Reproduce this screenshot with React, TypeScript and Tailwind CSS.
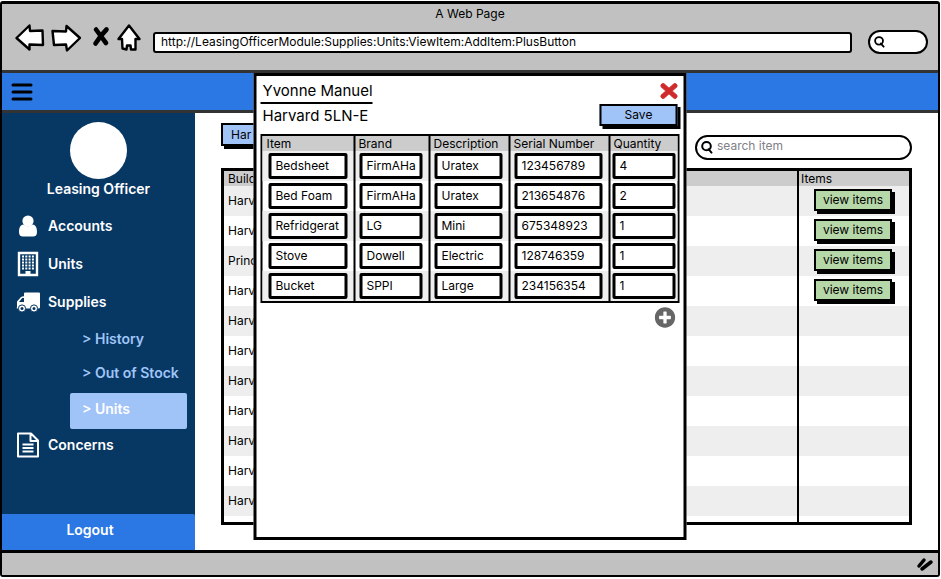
import React from "react";
import { FaPlusCircle, FaTimes } from "react-icons/fa";

const units = [
  "Harvard",
  "Harvard",
  "Princeton",
  "Harvard",
  "Harvard",
  "Harvard",
  "Harvard",
  "Harvard",
  "Harvard",
  "Harvard",
  "Harvard",
];

const fields = ["Item", "Brand", "Description", "Serial Number", "Quantity"];

const supplies = [
  ["Bedsheet", "FirmAHa", "Uratex", "123456789", "4"],
  ["Bed Foam", "FirmAHa", "Uratex", "213654876", "2"],
  ["Refridgerat", "LG", "Mini", "675348923", "1"],
  ["Stove", "Dowell", "Electric", "128746359", "1"],
  ["Bucket", "SPPI", "Large", "234156354", "1"],
];

function Magnifier({ className }: { className: string }) {
  return (
    <svg viewBox="0 0 12 13" className={className} fill="none" stroke="currentColor" strokeWidth="2" strokeLinecap="round" aria-hidden="true">
      <ellipse cx="5.5" cy="5.2" rx="4.3" ry="4.1" />
      <path d="M7.5 8.2l3 3.4" />
    </svg>
  );
}

function BrowserHeader() {
  return (
    <header className="border-b-[3px] border-[#333] bg-[#c1c1c1] pb-4">
      <h1 className="pt-0.5 text-center text-[12px] leading-4">A Web Page</h1>
      <div className="flex items-center pl-[13px] pr-2.5">
        <button aria-label="Back" className="shrink-0">
          <svg viewBox="0 0 30 28" className="h-7 w-[30px]" fill="#fff" stroke="#000" strokeWidth="2.4" strokeLinejoin="round" aria-hidden="true">
            <path d="M14.500 1.500L1.500 14L14.500 25.500V20.500L28 21L27.500 6.500L15 7Z" />
          </svg>
        </button>
        <button aria-label="Forward" className="ml-1.5 shrink-0">
          <svg viewBox="0 0 30 28" className="h-7 w-[30px]" fill="#fff" stroke="#000" strokeWidth="2.4" strokeLinejoin="round" aria-hidden="true">
            <path d="M15.500 2L29 14L16 26.500L15 20.500L3 21L1.500 7L15 7.500Z" />
          </svg>
        </button>
        <button aria-label="Stop" className="ml-2.5 shrink-0">
          <svg viewBox="0 0 20 28" className="h-7 w-5" fill="none" stroke="#000" strokeWidth="4.600" strokeLinecap="round" aria-hidden="true">
            <path d="M5 5.500Q9 11 15 19M15.500 5.500Q10 11 4.500 19.500" />
          </svg>
        </button>
        <button aria-label="Home" className="ml-1.5 shrink-0">
          <svg viewBox="0 0 24 28" className="h-7 w-6" fill="#fff" stroke="#000" strokeWidth="2.4" strokeLinejoin="round" aria-hidden="true">
            <path d="M12 1.500L1.500 15H5L5.500 24.500L9.500 25.500L10 21.500H13.500L14 25.500H18.500V15H22.500Z" />
          </svg>
        </button>
        <input
          aria-label="Address"
          readOnly
          value="http://LeasingOfficerModule:Supplies:Units:ViewItem:AddItem:PlusButton"
          className="ml-3 mt-2 h-[21px] min-w-0 flex-1 rounded-[3px] border-2 border-black bg-white pl-1.5 pb-0.5 text-[12px] outline-none"
        />
        <label className="ml-4 mt-2 flex h-6 w-[60px] items-center rounded-full border-2 border-black bg-white pl-1">
          <Magnifier className="h-3 w-[11px] shrink-0" />
          <input aria-label="Search the web" className="w-full min-w-0 bg-transparent outline-none" />
        </label>
      </div>
    </header>
  );
}

const navLink = "flex h-[38px] items-center gap-2 pl-3.5 text-white";

function Sidebar() {
  return (
    <aside className="flex w-[193px] shrink-0 flex-col bg-[#073763] text-[14px] font-semibold leading-5 text-white">
      <div className="flex flex-col items-center pt-[9px]">
        <div className="h-[57px] w-[57px] rounded-full bg-white" />
        <p>Leasing Officer</p>
      </div>
      <nav aria-label="Main" className="pt-2">
        <a href="#accounts" className={navLink}>
          <svg viewBox="0 0 24 24" className="h-6 w-6 shrink-0" fill="currentColor" aria-hidden="true">
            <path d="M7.500 10.500C4 11 3 14 3 18Q3 22.500 7 22.500H17Q21 22.500 21 18C21 14 20 11 16.500 10.500Q12 14 7.500 10.500Z" />
            <circle cx="12" cy="7" r="5.600" />
          </svg>
          Accounts
        </a>
        <a href="#units" className={navLink}>
          <svg viewBox="0 0 24 26" className="h-[26px] w-6 shrink-0" aria-hidden="true">
            <path d="M3 2H21V24H3Z" fill="none" stroke="currentColor" strokeWidth="2.400" />
            <path d="M6 5.500H18.500M6 8.500H18.500M6 11.500H18.500M6 14.500H18.500M6 17.500H18.500" stroke="currentColor" strokeWidth="2" strokeDasharray="2 1.300" />
            <path d="M9.500 20H14.500V24H9.500Z" fill="currentColor" />
          </svg>
          Units
        </a>
        <a href="#supplies" className={navLink}>
          <svg viewBox="0 0 24 24" className="h-6 w-6 shrink-0" fill="currentColor" aria-hidden="true">
            <path fillRule="evenodd" d="M9 2.500H23Q24 2.500 24 3.500V17.500Q24 18.500 22 18.500H1.500Q0 18.500 1 17V11.500L5 7Q6 6.200 8 6.200V3.500Q8 2.500 9 2.500ZM3 12H8V8H6.200Z" />
            <circle cx="6" cy="18.500" r="3.600" stroke="#073763" />
            <circle cx="18" cy="18.500" r="3.600" stroke="#073763" />
            <circle cx="6" cy="18.500" r="1.500" fill="#073763" />
            <circle cx="18" cy="18.500" r="1.500" fill="#073763" />
          </svg>
          Supplies
        </a>
        <div className="pl-[68px] pr-2 text-[#9fc5f8]">
          <a href="#history" className="flex h-9 items-center pl-3">&gt; History</a>
          <a href="#out-of-stock" className="flex h-9 items-center whitespace-nowrap pb-1 pl-3">&gt; Out of Stock</a>
          <a href="#supply-units" aria-current="page" className="flex h-9 items-center rounded-[2px] bg-[#a0c3f8] pb-1 pl-3 text-white">&gt; Units</a>
        </div>
        <a href="#concerns" className="flex h-8 items-center gap-2 pl-3.5 text-white">
          <svg viewBox="0 0 24 26" className="h-[26px] w-6 shrink-0" fill="none" stroke="currentColor" strokeWidth="2" strokeLinejoin="round" aria-hidden="true">
            <path d="M2 1.500H15L22 8.500V24.500H2ZM14.500 1.500V9H22M6.500 12.500H17.500M6.500 16H17.500M6.500 19.500H17.500" />
          </svg>
          Concerns
        </a>
      </nav>
      <button className="mt-auto h-9 rounded-tr-[2px] bg-[#2b78e4] pb-1 pr-[17px] font-semibold">Logout</button>
    </aside>
  );
}

function UnitsPage() {
  return (
    <main className="min-w-0 flex-1 bg-white pl-[26px] pr-[26px] pt-2">
      <div className="flex items-start justify-between">
        <button className="mt-0.5 h-[23px] w-9 border-2 border-black bg-[#a0c3f8] pl-2 text-left text-[12px] shadow-[3px_3px_0_#000]">Har</button>
        <label className="mt-3.5 flex h-[25px] w-[217px] items-center gap-1 rounded-full border-2 border-black pl-1">
          <Magnifier className="h-[13px] w-3 shrink-0" />
          <input aria-label="Search item" placeholder="search item" className="w-full min-w-0 bg-transparent pb-1 text-[12px] placeholder-[#808088] outline-none" />
        </label>
      </div>
      <div className="mt-2 border-[3px] border-black">
        <table className="w-full border-collapse text-left text-[12px]">
          <thead>
            <tr className="h-[15px] bg-[#ccc] leading-[15px]">
              <th scope="col" className="border-r-2 border-black pl-1 font-normal">Building</th>
              <th scope="col" className="w-[111px] pl-0.5 font-normal">Items</th>
            </tr>
          </thead>
          <tbody>
            {units.map((building, i) => (
              <tr key={i} className="h-[30px] odd:bg-[#eee]">
                <td className="border-r-2 border-black p-0 pl-1">{building}</td>
                <td className="p-0 pl-[15px] pt-[3px] align-top">
                  {i < 4 && (
                    <button className="block h-[22px] w-[78px] border-2 border-black bg-[#b6d7a8] text-[12px] leading-4 shadow-[3px_3px_0_#000]">view items</button>
                  )}
                </td>
              </tr>
            ))}
          </tbody>
          <tfoot>
            <tr className="h-1.5">
              <td className="border-r-2 border-black p-0" />
              <td className="p-0" />
            </tr>
          </tfoot>
        </table>
      </div>
    </main>
  );
}

function AddItemDialog() {
  return (
    <section role="dialog" aria-label="Yvonne Manuel" className="absolute inset-y-0 left-1/2 mb-2.5 w-[433px] -translate-x-1/2 border-[3px] border-black bg-white px-1 pt-1">
      <div className="flex items-start justify-between">
        <div className="text-[15px] leading-6">
          <h2 className="border-b-2 border-black pl-0.5 leading-[22px]">Yvonne Manuel</h2>
          <p className="pl-0.5">Harvard 5LN-E</p>
        </div>
        <div className="flex flex-col items-end gap-0.5 pr-0.5">
          <button aria-label="Close" className="text-[#d02b2b]">
            <FaTimes className="h-[22px] w-[17px]" preserveAspectRatio="none" stroke="currentColor" strokeWidth="20" />
          </button>
          <button className="h-[22px] w-[78px] border-2 border-black bg-[#a0c3f8] text-[12px] leading-4 shadow-[3px_3px_0_#000]">Save</button>
        </div>
      </div>
      <div className="mt-1.5 border-2 border-black">
        <table className="w-full table-fixed border-collapse text-left text-[12px]">
          <colgroup>
            <col className="w-[92px]" />
            <col className="w-[75px]" />
            <col className="w-[80px]" />
            <col className="w-[100px]" />
            <col />
          </colgroup>
          <thead>
            <tr className="h-[15px] bg-[#ccc] leading-[15px]">
              {fields.map((field) => (
                <th key={field} scope="col" className="whitespace-nowrap border-r-2 border-black pl-1 font-normal last:border-r-0 not-first:pl-[3px]">{field}</th>
              ))}
            </tr>
          </thead>
          <tbody>
            {supplies.map((row) => (
              <tr key={row[0]} className="h-[30px] odd:bg-[#eee]">
                {row.map((value, i) => (
                  <td key={fields[i]} className="border-r-2 border-black p-0 pl-1 pr-1.5 first:pl-1.5 last:border-r-0 last:pl-0.5 last:pr-0.5">
                    <input aria-label={`${fields[i]}, ${row[0]}`} defaultValue={value} className="block h-[26px] w-full rounded-[2px] border-[3px] border-black bg-white pb-0.5 pl-1 outline-none" />
                  </td>
                ))}
              </tr>
            ))}
          </tbody>
        </table>
      </div>
      <div className="flex justify-end pt-1 pr-1">
        <button aria-label="Add item" className="text-[#666]">
          <FaPlusCircle className="h-[21px] w-[21px]" />
        </button>
      </div>
    </section>
  );
}

export default function App() {
  return (
    <div className="min-h-screen bg-white pb-0.5 pr-px pt-px font-['Inter','Noto_Sans',sans-serif] text-black">
      <div className="flex min-h-[calc(100vh-3px)] flex-col rounded-[3px] border-2 border-t-[3px] border-black">
        <BrowserHeader />
        <div className="relative flex flex-1 flex-col">
          <div className="flex items-center border-b-[3px] border-[#333] bg-[#2b78e4] pl-[9px]">
            <button aria-label="Menu">
              <svg viewBox="0 0 22 37" className="h-[37px] w-[22px]" stroke="#000" strokeWidth="3" strokeLinecap="round" aria-hidden="true">
                <path d="M2 12H20M2 19H20M2 26H20" />
              </svg>
            </button>
          </div>
          <div className="flex flex-1">
            <Sidebar />
            <UnitsPage />
          </div>
          <AddItemDialog />
        </div>
        <footer className="flex h-[25px] items-center justify-end border-t-[3px] border-black bg-[#c1c1c1] pr-1">
          <svg viewBox="0 0 18 16" className="h-4 w-[18px]" stroke="#000" strokeWidth="3.500" strokeLinecap="round" aria-hidden="true">
            <path d="M3 10L8 4M6 13L15 6" />
          </svg>
        </footer>
      </div>
    </div>
  );
}
